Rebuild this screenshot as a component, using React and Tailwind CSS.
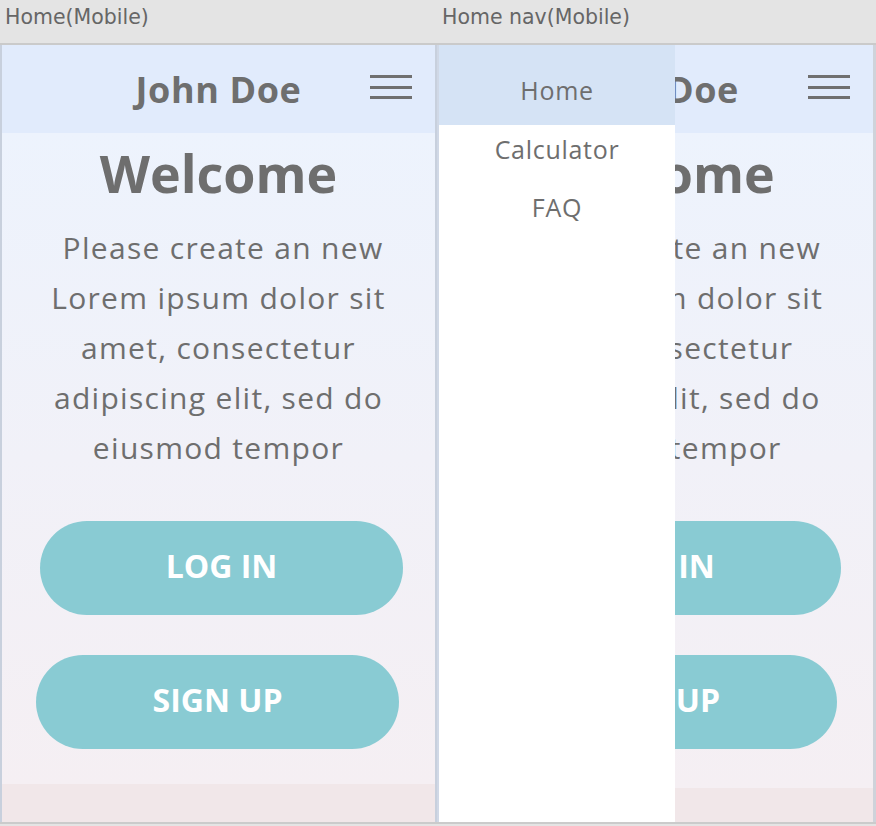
import React from 'react';

const font = { fontFamily: '"Open Sans", "Noto Sans", sans-serif' };

const Hamburger = () => (
  <svg width="42" height="26" viewBox="0 0 42 26" className="block">
    <rect x="0" y="0" width="42" height="3" fill="#707070" />
    <rect x="0" y="11" width="42" height="3" fill="#707070" />
    <rect x="0" y="21" width="42" height="3" fill="#707070" />
  </svg>
);

const MobileScreen = ({ footerTop = 'h-[38px]' }) => (
  <div className="flex flex-col h-full">
    {/* Header */}
    <div className="h-[88px] shrink-0 bg-[#e1ebfc] flex items-center relative">
      <h1 className="w-full text-center text-[36px] font-bold text-[#6e6e6e] tracking-[0.6px] pt-[2px]">
        John Doe
      </h1>
      <div className="absolute right-[23px] top-[30px]">
        <Hamburger />
      </div>
    </div>

    {/* Body */}
    <div className="flex-1 bg-gradient-to-b from-[#edf3fd] to-[#f5eff3] flex flex-col items-center">
      <h2 className="text-[52px] font-bold text-[#6e6e6e] leading-none mt-[14px]">Welcome</h2>
      <p className="mt-[24px] w-[390px] text-center text-[30px] leading-[50px] text-[#6e6e6e] tracking-[1.3px]">
        &nbsp;Please create an new Lorem ipsum dolor sit amet, consectetur adipiscing elit, sed do eiusmod tempor
      </p>
      <button className="mt-[48px] ml-[6px] w-[363px] h-[94px] rounded-full bg-[#89cbd3] text-white text-[32px] font-bold pb-[5px]">
        LOG IN
      </button>
      <button className="mt-[40px] -ml-[2px] w-[363px] h-[94px] rounded-full bg-[#89cbd3] text-white text-[32px] font-bold pb-[5px]">
        SIGN UP
      </button>
    </div>

    {/* Footer */}
    <div className={`${footerTop} shrink-0 bg-[#f1e7e9]`} />
  </div>
);

export default function App() {
  return (
    <div className="w-[876px] h-[826px] bg-[#e4e4e4] overflow-hidden" style={font}>
      {/* Artboard labels */}
      <div className="h-[45px] flex border-b-2 border-[#cacaca] text-[#666666] text-[20.5px]" style={{ fontFamily: '"DejaVu Sans", sans-serif' }}>
        <div className="w-[437px] pl-[5px] pt-[2px]">Home(Mobile)</div>
        <div className="pl-[5px] pt-[2px]">Home nav(Mobile)</div>
      </div>

      <div className="flex h-[779px] border-b-2 border-[#cbcbcb]">
        {/* Home */}
        <div className="w-[437px] h-full border-l-2 border-r-2 border-[#c8d0dd]">
          <MobileScreen />
        </div>

        {/* Home nav */}
        <div className="w-[439px] h-full border-l-2 border-r-[3px] border-l-[#d0d8e6] border-r-[#cfd3da] relative">
          <MobileScreen footerTop="h-[34px]" />
          <nav className="absolute left-0 top-0 bottom-0 w-[236px] bg-white flex flex-col text-[25px] text-[#6e6e6e] tracking-[0.7px]">
            <div className="h-[80px] bg-[#d5e3f5] flex items-end justify-center pb-[16px]">Home</div>
            <div className="h-[59px] flex items-center justify-center pb-[9px]">Calculator</div>
            <div className="h-[58px] flex items-center justify-center pb-[10px]">FAQ</div>
          </nav>
        </div>
      </div>
    </div>
  );
}
